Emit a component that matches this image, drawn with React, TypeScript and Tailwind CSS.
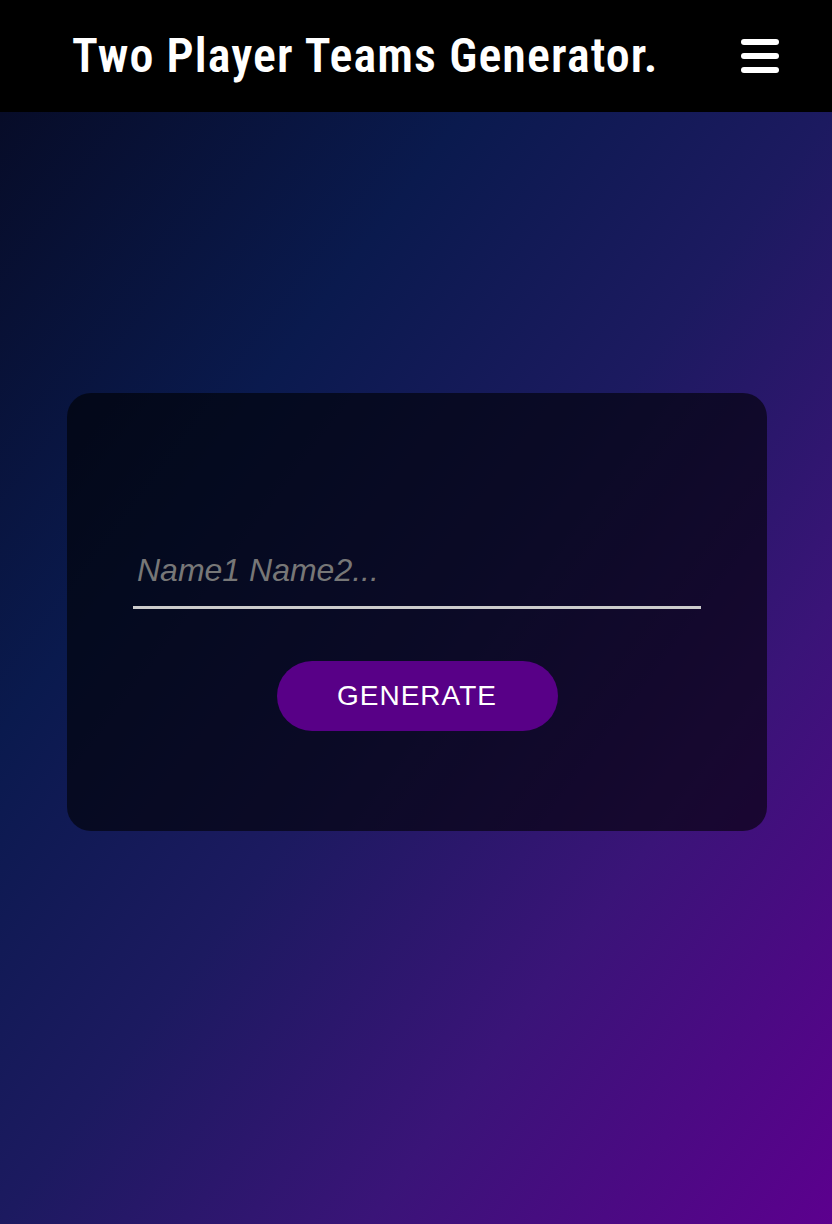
export default function App() {
  return (
    <div className="min-h-[1224px] flex flex-col">
      <header className="h-[112px] bg-black flex items-center justify-between pl-[72px] pr-[53px]">
        <h1 className="text-white text-[48px] font-semibold tracking-[1.1px] leading-none [font-family:'Liberation_Sans_Narrow','Roboto_Condensed',Roboto,sans-serif]">
          Two Player Teams Generator.
        </h1>
        <button className="flex flex-col gap-[8px] w-[38px]" aria-label="menu">
          <span className="block h-[6px] w-full rounded-full bg-white" />
          <span className="block h-[6px] w-full rounded-full bg-white" />
          <span className="block h-[6px] w-full rounded-full bg-white" />
        </button>
      </header>
      <main className="flex-1 h-[1112px] bg-[linear-gradient(to_bottom_right,#070c28_0%,#0a1a4e_28%,#1c1a60_50%,#3a1478_72%,#5c008e_100%)] pt-[281px] pl-[67px]">
        <div className="w-[700px] rounded-[24px] bg-black/60 h-[438px] px-[66px] pt-[153px] flex flex-col items-center">
          <div className="w-full border-b-[3px] border-[#cccccc] pb-[12px] pl-[4px]">
            <input
              placeholder="Name1 Name2..."
              className="w-full h-[48px] leading-[48px] bg-transparent outline-none text-[32px] italic text-white placeholder:text-[#777777] [font-family:'Liberation_Sans',Arial,sans-serif]"
            />
          </div>
          <button className="mt-[52px] w-[281px] h-[70px] rounded-full bg-[#580087] text-white text-[28px] tracking-[1px] [font-family:'Liberation_Sans',Arial,sans-serif]">
            GENERATE
          </button>
        </div>
      </main>
    </div>
  );
}
